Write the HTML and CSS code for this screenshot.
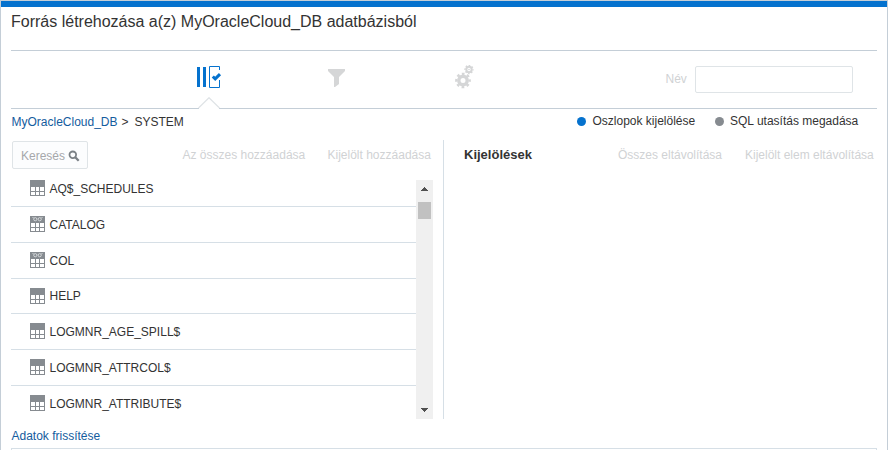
FILE: index.html
```html
<!DOCTYPE html>
<html lang="hu">
<head>
<meta charset="utf-8">
<title>Forrás létrehozása</title>
<link rel="stylesheet" href="styles.css">
</head>
<body>
<svg width="0" height="0" class="defs" aria-hidden="true">
  <symbol id="table" viewBox="0 0 15 16">
    <path fill="#fff" d="M0 0h15v16H0z"/>
    <path fill="#868b90" d="M0 0h15v7H0z"/>
    <path fill="none" stroke="#868b90" d="M.5 0v16M14.500 0v16M5.500 6v10M9.500 6v10M0 11.500h15M0 15.500h15"/>
  </symbol>
  <symbol id="view" viewBox="0 0 15 16">
    <use href="#table"/>
    <path fill="none" stroke="#d5d8da" d="M2.500 1.500h1M11.500 1.500h1"/>
    <circle cx="5.300" cy="3.200" r="1.600" fill="none" stroke="#d5d8da"/>
    <circle cx="9.700" cy="3.200" r="1.600" fill="none" stroke="#d5d8da"/>
  </symbol>
</svg>
<main class="dialog">
  <h1 class="title"><span class="t-title">Forrás létrehozása a(z) MyOracleCloud_DB adatbázisból</span></h1>
  <section class="steps">
    <svg class="step columns" width="26" height="24" viewBox="0 0 26 24">
      <path fill="#0572ce" d="M1 2h3v20H1zM7 2h3v20H7z"/>
      <path fill="none" stroke="#0572ce" d="M23.500 5V1.500h-10v21h10V15"/>
      <path fill="none" stroke="#0572ce" stroke-width="3" d="M16.800 11.500l2.400 2.400 4.800-4.800"/>
    </svg>
    <svg class="step filter" width="17" height="18" viewBox="0 0 17 18">
      <path fill="#d5d6d7" d="M0 0h17v2l-6 6v7l-4 3h-1V8L0 2z"/>
    </svg>
    <svg class="step gears" width="20" height="24" viewBox="0 0 20 24">
      <g fill="none" stroke="#d5d6d7">
        <circle cx="8" cy="15.500" r="4.200" stroke-width="3.400"/>
        <circle cx="8" cy="15.500" r="6.700" stroke-width="2.300" stroke-dasharray="2.700 2.560" stroke-dashoffset="1.350"/>
        <circle cx="14" cy="4.500" r="2.700" stroke-width="2"/>
        <circle cx="14" cy="4.500" r="4" stroke-width="1.400" stroke-dasharray="1.600 1.542" stroke-dashoffset=".8"/>
      </g>
      <circle cx="14" cy="4.500" r=".8" fill="#d5d6d7"/>
    </svg>
    <label class="name" for="name"><span class="t-name">Név</span></label>
    <input class="field" id="name" type="text">
    <svg class="notch" width="22" height="12" viewBox="0 0 22 12">
      <path fill="#fff" d="M1 12V10.500L11 .5l10 10V12z"/>
      <path fill="none" stroke="#dfe3e6" stroke-width="1.200" d="M.5 11L11 .7 21.500 11"/>
    </svg>
  </section>
  <section class="context">
    <nav class="crumbs"><a class="t-crumb">MyOracleCloud_DB</a><span class="gt">&gt;</span><span class="t-system">SYSTEM</span></nav>
    <div class="modes">
      <i class="dot on"></i><span class="t-cols">Oszlopok kijelölése</span>
      <i class="dot"></i><span class="t-sql">SQL utasítás megadása</span>
    </div>
  </section>
  <section class="panels">
    <div class="available">
      <div class="tools">
        <button class="search"><span class="t-search">Keresés</span><svg width="12" height="12" viewBox="0 0 12 12"><circle cx="4.800" cy="4.800" r="3.300" fill="none" stroke="#7b8186" stroke-width="1.800"/><path stroke="#7b8186" stroke-width="2.300" d="M7 7l3.700 3.700"/></svg></button>
        <span class="action t-addall">Az összes hozzáadása</span>
        <span class="action t-addsel">Kijelölt hozzáadása</span>
      </div>
      <div class="listbox">
        <ul class="list">
          <li><svg class="ico"><use href="#table"/></svg><span class="r1">AQ$_SCHEDULES</span></li>
          <li><svg class="ico"><use href="#view"/></svg><span class="r2">CATALOG</span></li>
          <li><svg class="ico"><use href="#view"/></svg><span class="r3">COL</span></li>
          <li><svg class="ico"><use href="#table"/></svg><span class="r4">HELP</span></li>
          <li><svg class="ico"><use href="#table"/></svg><span class="r5">LOGMNR_AGE_SPILL$</span></li>
          <li><svg class="ico"><use href="#table"/></svg><span class="r6">LOGMNR_ATTRCOL$</span></li>
          <li><svg class="ico"><use href="#table"/></svg><span class="r7">LOGMNR_ATTRIBUTE$</span></li>
        </ul>
        <div class="scrollbar">
          <svg width="7" height="4" viewBox="0 0 7 4" shape-rendering="crispEdges"><path fill="#505050" d="M3 0h1v1h1v1h1v1h1v1H0V3h1V2h1V1h1z"/></svg>
          <div class="thumb"></div>
          <svg class="down" width="7" height="4" viewBox="0 0 7 4" shape-rendering="crispEdges"><path fill="#505050" d="M0 0h7v1H6v1H5v1H4v1H3V3H2V2H1V1H0z"/></svg>
        </div>
      </div>
    </div>
    <div class="selected">
      <h2 class="t-sel">Kijelölések</h2>
      <span class="action t-remall">Összes eltávolítása</span>
      <span class="action t-remsel">Kijelölt elem eltávolítása</span>
    </div>
  </section>
  <div class="refresh"><a class="t-refresh">Adatok frissítése</a></div>
  <div class="preview"></div>
</main>
</body>
</html>
```
FILE: styles.css
```css
* { box-sizing: border-box; }
body { margin: 0; font: 12px/14px "Liberation Sans", Arial, sans-serif; color: #333; background: #fff; }
.defs { position: absolute; }
span, a, h2 { white-space: nowrap; }
a { color: #145c9e; }
.dialog { height: 450px; border: 1px solid #c4ced7; border-bottom: 0; overflow: hidden; padding: 0 10px; display: flex; flex-direction: column; }
.title { margin: 0 -10px; height: 49px; flex: none; border-top: 6px solid #0572ce; padding: 5px 10px 0; font-size: 16px; line-height: 19px; font-weight: 400; }
.steps { position: relative; flex: none; height: 59px; border-top: 1px solid #c4ced7; border-bottom: 1px solid #c4ced7; display: flex; align-items: flex-start; }
.columns { margin: 14px 0 0 185px; }
.filter { margin: 18px 0 0 106px; }
.gears { margin: 14px 0 0 110px; }
.name { margin: 21px 0 0 190.500px; width: 29.500px; color: #d0d2d4; }
.field { width: 158px; height: 27px; margin-top: 15px; border: 1px solid #dfe4e7; border-radius: 2px; background: #fff; }
.notch { position: absolute; left: 187px; bottom: -1px; }
.context { flex: none; height: 31px; display: flex; justify-content: space-between; padding-top: 5px; }
.crumbs { display: flex; padding: 1px 0 0 .5px; }
.crumbs a { width: 110px; }
.gt { width: 13px; }
.modes { display: flex; width: 300px; }
.dot { flex: none; width: 9px; height: 9px; margin: 3px 6.500px 0 0; border-radius: 50%; background: #868b90; }
.dot.on { background: #0572ce; }
.modes .t-cols { width: 122px; }
.panels { flex: none; height: 279px; display: flex; }
.available { width: 433px; border-right: 1px solid #d6dfe6; }
.tools { height: 40px; display: flex; }
.search { width: 76px; height: 28px; margin: 1px 94.500px 0 1px; padding: 1px 8px 0; display: flex; align-items: center; gap: 4px; border: 1px solid #dfe4e7; border-radius: 2px; background: #fcfdfe; color: #a6a8ab; font: inherit; }
.search svg { flex: none; margin-left: -1px; }
.action { padding-top: 8px; color: #d0d2d4; }
.t-addall { width: 145px; }
.listbox { height: 239px; display: flex; width: 422px; }
.list { flex: 1; margin: 0; padding: 0; list-style: none; overflow: hidden; }
.list li { height: 35.800px; display: flex; align-items: center; gap: 4.500px; padding-left: 19px; border-bottom: 1px solid #d6dfe6; }
.list li:first-child { margin-top: -8.750px; }
.list span { margin-top: .800px; }
.ico { width: 15px; height: 16px; flex: none; margin-top: -1px; }
.scrollbar { width: 17px; background: #f0f0f0; padding: 7px 2px; display: flex; flex-direction: column; align-items: center; }
.thumb { width: 13px; height: 17px; margin-top: 11px; background: #c1c1c1; }
.down { margin-top: auto; }
.selected { flex: 1; display: flex; padding-left: 20px; }
.t-sel { width: 154px; margin: 0; padding-top: 8px; font-size: 13px; font-weight: 700; }
.t-remall { width: 127px; }
.refresh { flex: none; height: 29px; padding: 10px 0 0 .5px; }
.preview { flex: none; height: 20px; border: 1px solid #d6dfe6; }
```
